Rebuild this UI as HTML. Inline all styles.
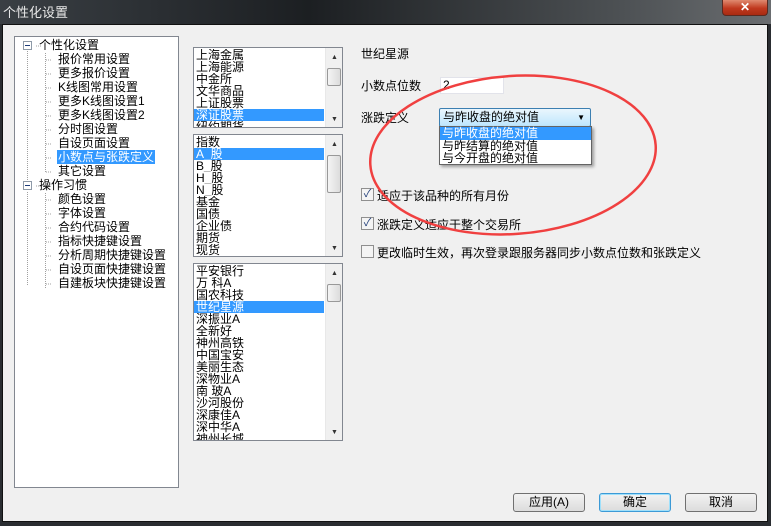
<!DOCTYPE html>
<html><head><meta charset="utf-8"><style>
*{margin:0;padding:0;box-sizing:border-box}
body{width:771px;height:526px;overflow:hidden;background:#2a2d31;font-family:"Liberation Sans","Noto Sans CJK SC","WenQuanYi Zen Hei",sans-serif;font-size:12px;color:#000;position:relative}
.title{position:absolute;left:0;top:0;width:771px;height:24px;background:linear-gradient(90deg,#3a3f44 0%,#1c1f22 40%,#4c5053 80%,#6a6d70 100%)}
.title span{position:absolute;left:3px;top:2px;color:#e8e8e8;font-size:13px}
.close{position:absolute;left:722px;top:0;width:46px;height:16px;border:1px solid #5a2a20;border-top:none;border-radius:0 0 4px 4px;background:linear-gradient(#e08a70,#c0391e 55%,#a82a12);color:#fff;text-align:center;font-size:12px;line-height:14px;font-weight:bold}
.client{position:absolute;left:2px;top:24px;width:766px;height:498px;background:#f0f0f0;border:1px solid #111}
.box{position:absolute;background:#fff;border:1px solid #828790}
.abs{position:absolute;white-space:nowrap}
.tree div{position:absolute;white-space:nowrap;line-height:14px;height:14px}
.sel{background:#3399ff;color:#fff}
.list > div.r{height:12px;line-height:12px;padding-left:2px;white-space:nowrap;overflow:hidden;font-size:12px}
.list .sb{position:absolute;right:0;top:0;width:17px;bottom:0;background:#f0f0f0;border-left:1px solid #e8e8e8}
.list .sb .th{position:absolute;left:1px;width:14px;height:18px;top:20px;background:linear-gradient(90deg,#f4f4f4,#dcdcdc);border:1px solid #999;border-radius:2px}
.list .sb .u,.list .sb .d{position:absolute;left:5px;font-size:7px;color:#333}
.btn{position:absolute;top:493px;width:72px;height:19px;border:1px solid #707070;border-radius:3px;background:linear-gradient(#f2f2f2,#dcdcdc);text-align:center;line-height:17px;font-size:12px}
.cb{position:absolute;width:13px;height:13px;border:1px solid #8f8f8f;background:#f4f4f4;font-size:11px;line-height:11px;text-align:center;color:#24407a}
</style></head><body>
<div class="title"><span>个性化设置</span></div>
<div class="close">✕</div>
<div class="client"></div>

<div class="box tree" style="left:14px;top:36px;width:165px;height:452px">
<svg class="abs" style="left:0;top:0" width="60" height="260">
<g stroke="#a0a0a0" stroke-dasharray="1,1" fill="none">
<path d="M12.5 14V149M12.5 155V248M26 9h-5M26 149h-5"/>
<path d="M30.5 16V135M30.5 156V252"/>
<path d="M31 23h6M31 37h6M31 51h6M31 65h6M31 79h6M31 93h6M31 107h6M31 121h6M31 135h6M31 163h6M31 177h6M31 191h6M31 205h6M31 219h6M31 233h6M31 247h6"/>
</g>
<rect x="8.5" y="4.5" width="8" height="8" fill="#fff" stroke="#8e9aa8"/><path d="M10 8.5h5" stroke="#1e3d7a"/>
<rect x="8.5" y="144.5" width="8" height="8" fill="#fff" stroke="#8e9aa8"/><path d="M10 148.5h5" stroke="#1e3d7a"/>
</svg>
<div style="left:24px;top:1px">个性化设置</div>
<div style="left:43px;top:15px">报价常用设置</div>
<div style="left:43px;top:29px">更多报价设置</div>
<div style="left:43px;top:43px">K线图常用设置</div>
<div style="left:43px;top:57px">更多K线图设置1</div>
<div style="left:43px;top:71px">更多K线图设置2</div>
<div style="left:43px;top:85px">分时图设置</div>
<div style="left:43px;top:99px">自设页面设置</div>
<div class="sel" style="left:42px;top:113px;padding:0 1px">小数点与张跌定义</div>
<div style="left:43px;top:127px">其它设置</div>
<div style="left:24px;top:141px">操作习惯</div>
<div style="left:43px;top:155px">颜色设置</div>
<div style="left:43px;top:169px">字体设置</div>
<div style="left:43px;top:183px">合约代码设置</div>
<div style="left:43px;top:197px">指标快捷键设置</div>
<div style="left:43px;top:211px">分析周期快捷键设置</div>
<div style="left:43px;top:225px">自设页面快捷键设置</div>
<div style="left:43px;top:239px">自建板块快捷键设置</div>
</div>

<div class="box list" style="left:193px;top:47px;width:150px;height:81px;overflow:hidden;padding-top:1px">
<div class="r">上海金属</div><div class="r">上海能源</div><div class="r">中金所</div><div class="r">文华商品</div><div class="r">上证股票</div><div class="r sel" style="width:130px">深证股票</div><div class="r">纽约期货</div>
<div class="sb"><span class="u" style="top:6px">▲</span><div class="th" style="top:20px"></div><span class="d" style="bottom:4px">▼</span></div>
</div>
<div class="box list" style="left:193px;top:134px;width:150px;height:123px;overflow:hidden;padding-top:1px">
<div class="r">指数</div><div class="r sel" style="width:130px">A_股</div><div class="r">B_股</div><div class="r">H_股</div><div class="r">N_股</div><div class="r">基金</div><div class="r">国债</div><div class="r">企业债</div><div class="r">期货</div><div class="r">现货</div>
<div class="sb"><span class="u" style="top:6px">▲</span><div class="th" style="top:20px;height:38px"></div><span class="d" style="bottom:4px">▼</span></div>
</div>
<div class="box list" style="left:193px;top:263px;width:150px;height:178px;overflow:hidden;padding-top:1px">
<div class="r">平安银行</div><div class="r">万 科A</div><div class="r">国农科技</div><div class="r sel" style="width:130px">世纪星源</div><div class="r">深振业A</div><div class="r">全新好</div><div class="r">神州高铁</div><div class="r">中国宝安</div><div class="r">美丽生态</div><div class="r">深物业A</div><div class="r">南 玻A</div><div class="r">沙河股份</div><div class="r">深康佳A</div><div class="r">深中华A</div><div class="r">神州长城</div>
<div class="sb"><span class="u" style="top:6px">▲</span><div class="th" style="top:20px"></div><span class="d" style="bottom:4px">▼</span></div>
</div>

<div class="abs" style="left:361px;top:45px">世纪星源</div>
<div class="abs" style="left:361px;top:77px">小数点位数</div>
<div class="abs" style="left:440px;top:77px;width:64px;height:17px;background:#fff;border:1px solid #e2e3ea;padding-left:2px;line-height:15px">2</div>
<div class="abs" style="left:361px;top:109px">涨跌定义</div>
<div class="abs" style="left:439px;top:108px;width:152px;height:19px;border:1px solid #3c7fb1;border-radius:2px;background:linear-gradient(#eaf6fd,#bee6fd);line-height:17px;padding-left:3px">与昨收盘的绝对值<span style="position:absolute;right:5px;top:0;font-size:8px">▼</span></div>
<div class="abs" style="left:439px;top:126px;width:153px;height:39px;background:#fff;border:1px solid #646464;box-shadow:2px 2px 3px rgba(0,0,0,.35);line-height:12px">
<div class="sel" style="padding-left:2px;height:13px">与昨收盘的绝对值</div>
<div style="padding-left:2px">与昨结算的绝对值</div>
<div style="padding-left:2px">与今开盘的绝对值</div>
</div>
<div class="cb" style="left:361px;top:188px">✓</div><div class="abs" style="left:377px;top:187px">适应于该品种的所有月份</div>
<div class="cb" style="left:361px;top:217px">✓</div><div class="abs" style="left:377px;top:216px">涨跌定义适应于整个交易所</div>
<div class="cb" style="left:361px;top:245px"></div><div class="abs" style="left:377px;top:244px">更改临时生效，再次登录跟服务器同步小数点位数和张跌定义</div>

<svg class="abs" style="left:0;top:0;pointer-events:none" width="771" height="526"><ellipse cx="513" cy="155" rx="143" ry="79" fill="none" stroke="#f04040" stroke-width="2.5" transform="rotate(-4 513 155)"/></svg>

<div class="btn" style="left:513px">应用(A)</div>
<div class="btn" style="left:599px;border-color:#3c9ad6;box-shadow:inset 0 0 0 1px #9fe0fb">确定</div>
<div class="btn" style="left:685px">取消</div>
</body></html>
